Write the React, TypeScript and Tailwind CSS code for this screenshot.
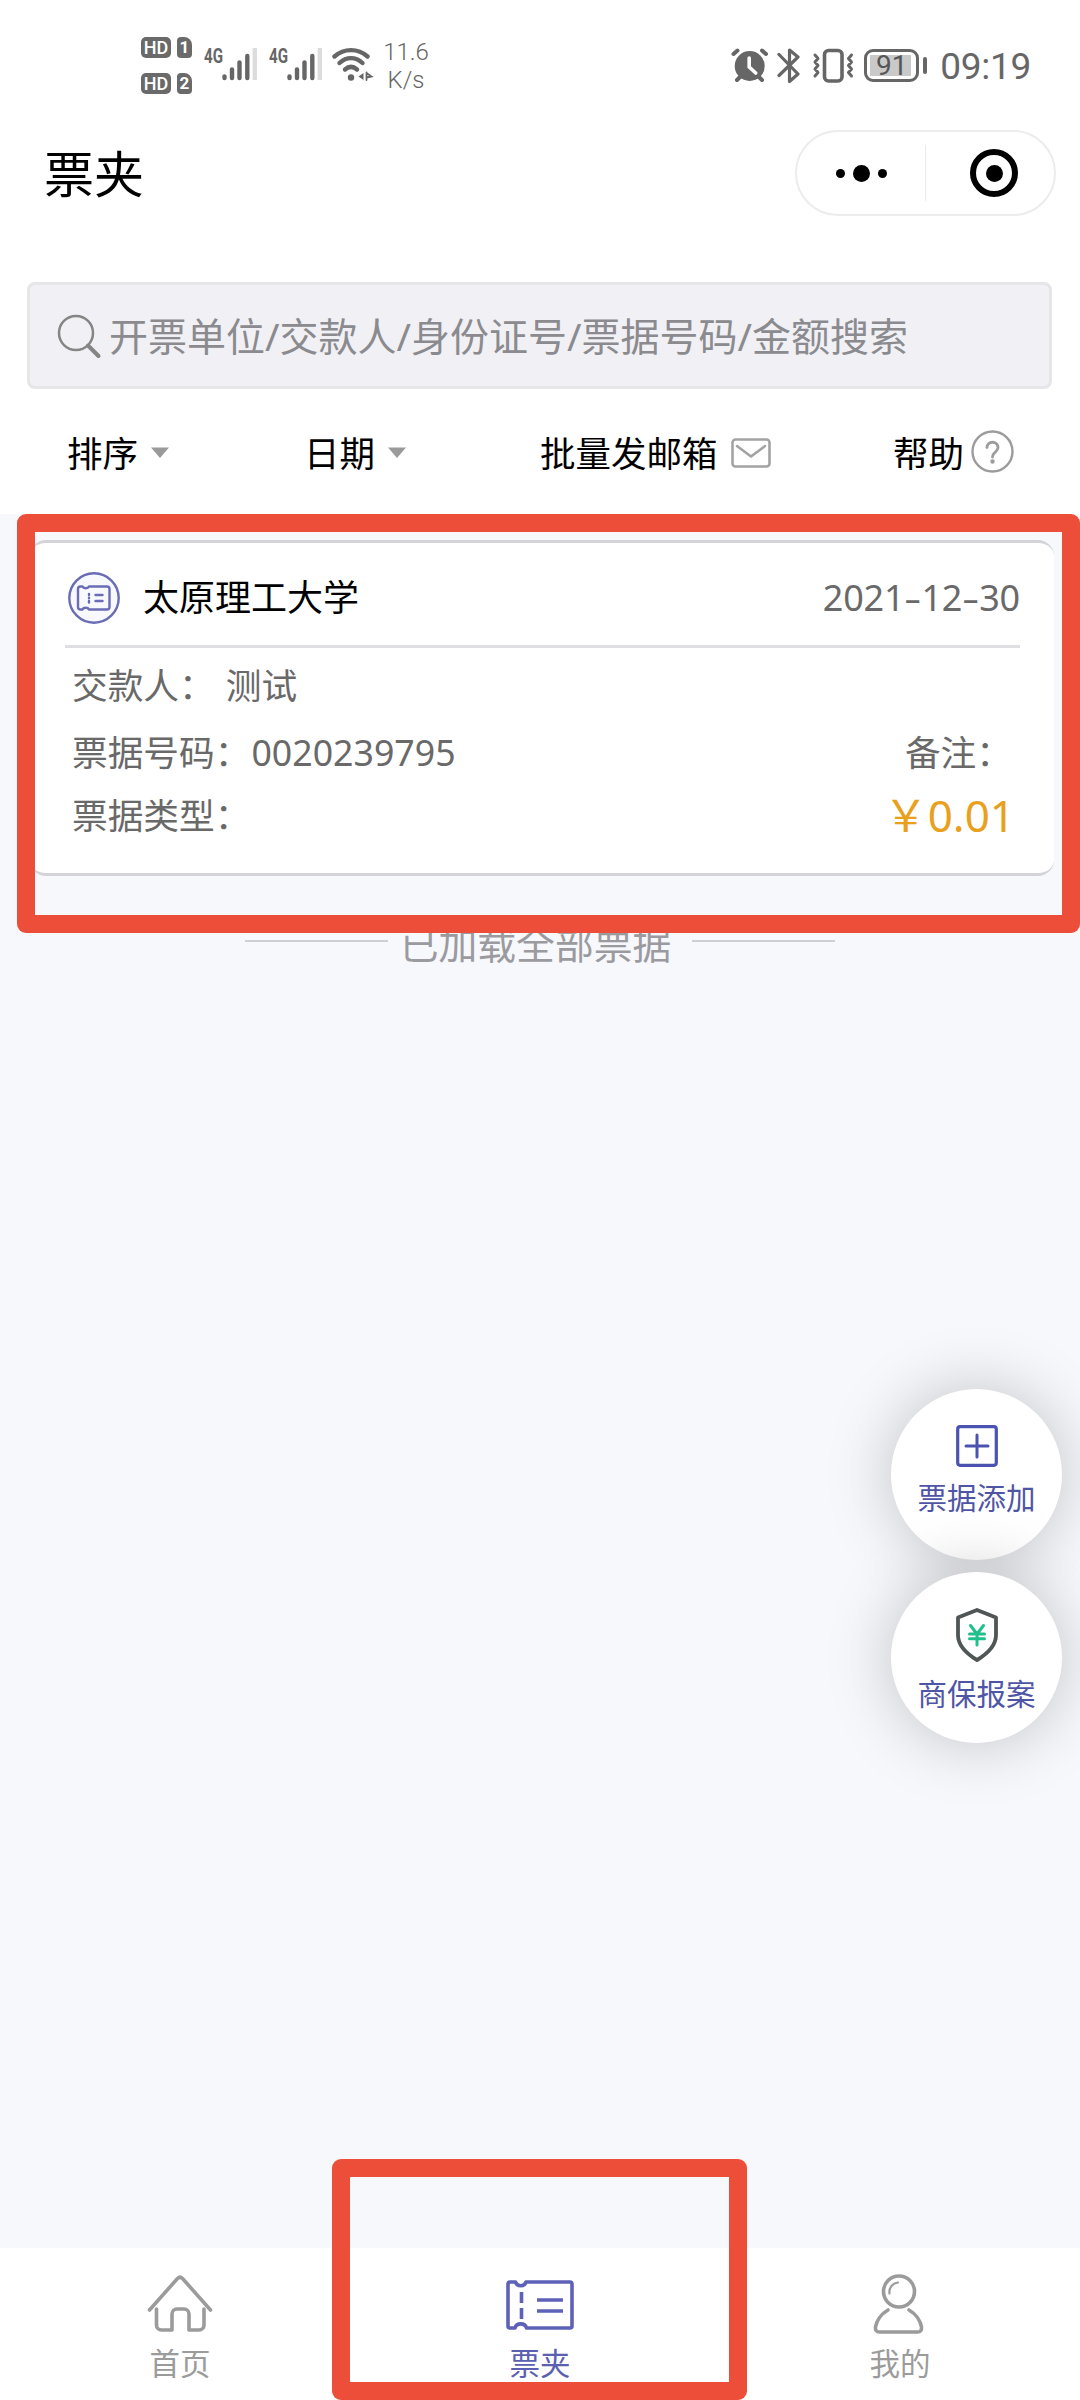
import type { ReactNode } from "react";

function SignalBars() {
  return (
    <div className="flex items-start">
      <span className="w-[18px] origin-left scale-x-[0.72] whitespace-nowrap font-[Roboto] text-[21px] leading-[18px] font-bold">
        4G
      </span>
      <svg width="36" height="36" viewBox="0 0 36 36" className="block">
        <g stroke="currentColor" strokeWidth="4.4" strokeLinecap="round">
          <path d="M2.5 29.5v1.5" />
          <path d="M10 22.5v8.5" />
          <path d="M17.5 15.5v15.5" />
          <path d="M25.3 9v22" />
        </g>
        <path d="M32.8 1v32" stroke="#dcdcdc" strokeWidth="4.4" />
      </svg>
    </div>
  );
}

function HdBadge({ sim }: { sim: string }) {
  return (
    <div className="flex gap-[6px] font-[Roboto] text-white">
      <span className="flex h-[21px] w-[30px] items-center justify-center rounded-[5px] bg-[#6a6a6a] text-[18px] leading-none font-medium">
        HD
      </span>
      <span className="flex h-[21px] w-[15px] items-center justify-center rounded-[4px] rounded-tr-[8px] bg-[#6a6a6a] text-[17px] leading-none font-bold">
        {sim}
      </span>
    </div>
  );
}

function StatusBar() {
  return (
    <div className="flex h-[124px] items-start justify-between pt-[37px] pr-[49px] pl-[141px] text-[#666]">
      <div className="flex">
        <div className="flex flex-col gap-[15px]">
          <HdBadge sim="1" />
          <HdBadge sim="2" />
        </div>
        <div className="mt-[10px] ml-[12px] flex gap-[11px]">
          <SignalBars />
          <SignalBars />
        </div>
        <svg
          width="42"
          height="36"
          viewBox="0 0 42 36"
          className="mt-[10px] ml-[9px]"
          fill="none"
          stroke="currentColor"
          strokeWidth="4.4"
          strokeLinecap="round"
        >
          <path d="M2.5 9.5C12 1 26 1 35.500 9.500" />
          <path d="M7.500 16C14.500 9.500 23.500 9.500 30.500 16" />
          <path d="M13 22.500c3.800-3.300 8.200-3.300 12 0" />
          <circle cx="19" cy="30.500" r="3.200" fill="currentColor" stroke="none" />
          <path d="M31.500 26v7l-5-3.500z" fill="currentColor" stroke="none" />
          <path d="M34.500 25.500v7.500M34.500 26l5 3.500-5 1" strokeWidth="1.800" />
        </svg>
        <div className="mt-[1px] ml-[8px] w-[48px] text-center font-[Roboto] text-[24px] leading-[28px] font-light">
          11.6
          <br />
          K/s
        </div>
      </div>

      <div className="mt-[10px] flex items-start">
        <svg width="37" height="37" viewBox="0 0 37 37" className="block">
          <g stroke="currentColor" strokeWidth="4" strokeLinecap="round" fill="none">
            <path d="M2.500 7l4-3.500M31 3.500l4 3.500M6 33l4-4M31 33l-4-4" />
          </g>
          <circle cx="18.700" cy="19" r="15" fill="currentColor" />
          <path
            d="M18.200 11v9l6.500 6"
            fill="none"
            stroke="#fff"
            strokeWidth="3.600"
            strokeLinecap="round"
          />
        </svg>
        <svg
          width="24"
          height="37"
          viewBox="0 0 24 37"
          className="ml-[9px]"
          fill="none"
          stroke="currentColor"
          strokeWidth="3.200"
          strokeLinecap="round"
          strokeLinejoin="round"
        >
          <path d="M2 7.500L21 27l-8.500 7.500V3L21 10 2 28.500" />
        </svg>
        <svg
          width="43"
          height="37"
          viewBox="0 0 43 37"
          className="ml-[11px]"
          fill="none"
          stroke="currentColor"
          strokeLinecap="round"
          strokeLinejoin="round"
        >
          <rect x="12.500" y="3.500" width="17.500" height="30.500" rx="4" strokeWidth="3.600" />
          <path
            d="M3 8l3 3.500-3 3.500 3 3.500-3 3.500 3 3.500-3 3.500M39.500 8l-3 3.500 3 3.500-3 3.500 3 3.500-3 3.500 3 3.500"
            strokeWidth="3"
          />
        </svg>
        <div className="mt-[2px] ml-[9px] flex items-center gap-[4px]">
          <div className="flex h-[33px] w-[55px] items-center rounded-[9px] border-[3px] border-current pl-[3px]">
            <div className="flex h-[21px] w-[41px] items-center justify-center bg-[#c9c9c9] pl-[2px] font-[Roboto] text-[28px] leading-none font-normal text-[#555]">
              91
            </div>
          </div>
          <div className="h-[17px] w-[4px] rounded-full bg-current" />
        </div>
        <div className="mt-[1px] ml-[13px] font-[Roboto] text-[37px] leading-[38px] font-normal tracking-[-0.3px]">
          09:19
        </div>
      </div>
    </div>
  );
}

function TitleBar() {
  return (
    <div className="flex h-[158px] items-start justify-between pr-[24px] pl-[44px]">
      <h1 className="mt-[20px] text-[50px] leading-[60px] text-black">票夹</h1>
      <div className="mt-[6px] flex h-[86px] w-[261px] items-center rounded-full border-[2px] border-[#ececec] bg-white">
        <div className="flex h-full w-[128px] items-center justify-center gap-[8px]">
          <span className="h-[9px] w-[9px] rounded-full bg-black" />
          <span className="h-[17px] w-[17px] rounded-full bg-black" />
          <span className="h-[9px] w-[9px] rounded-full bg-black" />
        </div>
        <div className="h-[56px] w-px bg-[#ebebeb]" />
        <div className="flex h-full flex-1 items-center justify-center pl-[8px]">
          <span className="flex h-[48px] w-[48px] items-center justify-center rounded-full border-[6px] border-black">
            <span className="h-[17px] w-[17px] rounded-full bg-black" />
          </span>
        </div>
      </div>
    </div>
  );
}

function SearchBox() {
  return (
    <div className="mr-[28px] ml-[27px] flex h-[107px] items-center rounded-[8px] border-[3px] border-[#e6e6e8] bg-[#f1f1f5] pl-[27px]">
      <svg
        width="46"
        height="46"
        viewBox="0 0 46 46"
        fill="none"
        stroke="#858585"
        strokeLinecap="round"
      >
        <circle cx="19" cy="20" r="17" strokeWidth="2.500" />
        <path d="M31 32.500l10.500 10.500" strokeWidth="4" />
      </svg>
      <span className="ml-[6px] text-[39px] leading-[50px] whitespace-nowrap text-[#8b8b8f]">
        开票单位/交款人/身份证号/票据号码/金额搜索
      </span>
    </div>
  );
}

function Caret() {
  return (
    <svg width="18" height="11" viewBox="0 0 18 11" className="ml-[13px]">
      <path d="M0 .500h18L9 11z" fill="#9a9a9a" />
    </svg>
  );
}

function FilterBar() {
  return (
    <div className="flex h-[125px] items-center pt-[2px] pl-[67px] text-[35.5px] leading-[44px] text-black">
      <div className="flex w-[237px] items-center">
        排序
        <Caret />
      </div>
      <div className="flex w-[236px] items-center">
        日期
        <Caret />
      </div>
      <div className="flex w-[353px] items-center">
        批量发邮箱
        <svg
          width="40"
          height="30"
          viewBox="0 0 40 30"
          className="ml-[13px]"
          fill="none"
          stroke="#a3a3a3"
          strokeWidth="2.600"
          strokeLinejoin="round"
          strokeLinecap="round"
        >
          <rect x="1.500" y="1.500" width="37" height="27" rx="3" />
          <path d="M6 8l14 10.500L34 8" />
        </svg>
      </div>
      <div className="flex items-center">
        帮助
        <svg
          width="43"
          height="43"
          viewBox="0 0 43 43"
          className="mb-[3px] ml-[7px]"
          fill="none"
          stroke="#9c9c9c"
          strokeWidth="2.400"
          strokeLinecap="round"
        >
          <circle cx="21.500" cy="21.500" r="20" />
          <path d="M16 17.500c0-7 11-7 11 0 0 4.500-5.500 4.500-5.500 9.500" strokeWidth="2.800" />
          <circle cx="21.500" cy="31.500" r="1" fill="#9c9c9c" />
        </svg>
      </div>
    </div>
  );
}

function CardIcon() {
  return (
    <svg
      width="52"
      height="52"
      viewBox="0 0 52 52"
      fill="none"
      stroke="#6a6cb4"
      strokeLinecap="round"
      strokeLinejoin="round"
    >
      <circle cx="26" cy="26" r="24.700" fill="#f8f9ff" strokeWidth="2.400" />
      <path
        d="M12.500 14.500h2c1 2.300 5.500 2.300 6.500 0h18a2.500 2.500 0 0 1 2.500 2.500v18a2.500 2.500 0 0 1-2.500 2.500H21c-1-2.300-5.500-2.300-6.500 0h-2a2.500 2.500 0 0 1-2.500-2.500v-18a2.500 2.500 0 0 1 2.500-2.500z"
        strokeWidth="2.400"
      />
      <path d="M21 22v1M21 29v1.500M27.500 23h7M27.500 29h7M21 25.800v.4" strokeWidth="2.400" />
    </svg>
  );
}

function TicketDate({ value }: { value: string }) {
  return (
    <span className="ml-auto flex text-[36px] tracking-[-0.2px]">
      {value.split("").map((char, i) =>
        char === "-" ? (
          <span key={i} className="w-[17px] scale-x-150 text-center">
            {char}
          </span>
        ) : (
          <span key={i}>{char}</span>
        )
      )}
    </span>
  );
}

function TicketCard() {
  return (
    <div className="mr-[26px] ml-[30px] h-[336px] rounded-[16px] border-y-[3px] border-[#d3d3d9] bg-white pr-[34px] pl-[35px] text-[35.7px] leading-[44px] text-[#696969]">
      <div className="flex h-[105px] items-center border-b-[3px] border-[#dfdfe1] pt-[7px] pl-[3px]">
        <CardIcon />
        <span className="ml-[23px] text-[36px] text-black">太原理工大学</span>
        <TicketDate value="2021-12-30" />
      </div>
      <div className="pr-[5px] pl-[7px]">
        <div className="flex h-[74px] items-center">
          <span>交款人：</span>
          <span className="ml-[11px]">测试</span>
        </div>
        <div className="flex h-[60px] items-center justify-between">
          <div className="flex">
            <span>票据号码：</span>
            <span className="ml-[1px]">0020239795</span>
          </div>
          <span className="mr-[3px]">备注：</span>
        </div>
        <div className="flex h-[65px] items-center justify-between">
          <span>票据类型：</span>
          <span className="text-[44px]">
            <span className="text-[#e9a01d]">￥0.01</span>
          </span>
        </div>
      </div>
    </div>
  );
}

function ListEnd() {
  return (
    <div className="mt-[44px] flex h-[48px] items-center justify-center gap-[12px] text-[38.8px] leading-[48px] text-[#9b9b9f]">
      <span className="mb-[6px] h-[2px] w-[143px] bg-[#cfcfd3]" />
      <span>已加载全部票据</span>
      <span className="mb-[6px] ml-[9px] h-[2px] w-[143px] bg-[#cfcfd3]" />
    </div>
  );
}

function FloatButton({ icon, label }: { icon: ReactNode; label: string }) {
  return (
    <div className="flex h-[171px] w-[171px] flex-col items-center rounded-full bg-white pt-[36px] text-[#4f55a5] shadow-[0_0_66px_rgba(0,0,0,0.22)]">
      {icon}
      <span className="text-[29.5px] leading-[36px] whitespace-nowrap">{label}</span>
    </div>
  );
}

function FloatButtons() {
  return (
    <div className="absolute top-[1389px] right-[18px] flex flex-col gap-[12px]">
      <FloatButton
        label="票据添加"
        icon={
          <svg
            width="42"
            height="42"
            viewBox="0 0 42 42"
            className="mb-[13px]"
            fill="none"
            stroke="#4a53b0"
            strokeLinecap="round"
          >
            <rect x="1.700" y="1.700" width="38.600" height="38.600" rx="2.500" strokeWidth="3.200" />
            <path d="M10 21h22M21 10v22" strokeWidth="3" />
          </svg>
        }
      />
      <FloatButton
        label="商保报案"
        icon={
          <svg
            width="42"
            height="54"
            viewBox="0 0 42 54"
            className="mb-[14px]"
            fill="none"
            strokeLinejoin="round"
          >
            <path
              d="M21 2L40 9.500V27c0 11-9 19-19 25C11 46 2 38 2 27V9.500z"
              stroke="#505556"
              strokeWidth="3.800"
            />
            <path
              d="M14.500 17.500l6.500 8.500 6.500-8.500M21 26v11M13.500 26h15M13.500 30.800h15"
              stroke="#1fc08a"
              strokeWidth="3"
              strokeLinecap="round"
            />
          </svg>
        }
      />
    </div>
  );
}

function TabItem({
  icon,
  label,
  active,
}: {
  icon: ReactNode;
  label: string;
  active?: boolean;
}) {
  return (
    <div
      className={`flex flex-col items-center pt-[24px] ${
        active ? "text-[#5c60b0]" : "text-[#9b9b9b]"
      }`}
    >
      <div className="flex h-[64px] items-center">{icon}</div>
      <span className="mt-[7px] text-[30.5px] leading-[40px]">{label}</span>
    </div>
  );
}

function TabBar() {
  return (
    <div className="mt-auto grid h-[152px] grid-cols-3 bg-white">
      <TabItem
        label="首页"
        icon={
          <svg
            width="66"
            height="60"
            viewBox="0 0 66 60"
            fill="none"
            stroke="currentColor"
            strokeWidth="3.600"
            strokeLinecap="round"
            strokeLinejoin="round"
          >
            <path d="M2.500 36L30.500 4.500q2.500-2.500 5 0L63.500 36" />
            <path d="M9.500 35v16a5 5 0 0 0 5 5H25V40a5 5 0 0 1 5-5h7a5 5 0 0 1 5 5v16h10a5 5 0 0 0 5-5V35" />
          </svg>
        }
      />
      <TabItem
        active
        label="票夹"
        icon={
          <svg
            width="68"
            height="50"
            viewBox="0 0 68 50"
            className="mt-[2px]"
            fill="none"
            stroke="#5d61b8"
            strokeWidth="3.600"
            strokeLinejoin="round"
          >
            <path d="M4 2h5.500c1.500 5 9 5 10.500 0H64a2 2 0 0 1 2 2v42a2 2 0 0 1-2 2H20.500c-1.500-5.500-10-5.500-11.500 0H4a2 2 0 0 1-2-2V4a2 2 0 0 1 2-2z" />
            <path d="M15.500 12v11M15.500 28v11M31 20h26M31 31h26" />
          </svg>
        }
      />
      <TabItem
        label="我的"
        icon={
          <svg
            width="52"
            height="62"
            viewBox="0 0 52 62"
            className="mr-[2px]"
            fill="none"
            stroke="currentColor"
            strokeWidth="3.600"
            strokeLinecap="round"
            strokeLinejoin="round"
          >
            <circle cx="26" cy="18.500" r="15.500" />
            <path d="M16.500 20.500a9.500 9.500 0 0 1 8.500-11" strokeWidth="2.200" />
            <path d="M15 37C8 41 3.500 48 2.500 54q-.5 5 4 5h38q4.500 0 4-5C47.500 48 43 41 36 37" />
          </svg>
        }
      />
    </div>
  );
}

export default function App() {
  return (
    <div className="relative flex h-[2400px] w-[1080px] flex-col overflow-hidden bg-[#f7f8fc] font-['Noto_Sans','Noto_Sans_CJK_SC',sans-serif]">
      <div className="bg-white">
        <StatusBar />
        <TitleBar />
        <SearchBox />
        <FilterBar />
      </div>
      <div className="pt-[26px]">
        <TicketCard />
        <ListEnd />
      </div>
      <TabBar />

      <FloatButtons />

      {/* red highlight frames drawn over the page */}
      <div className="absolute top-[514px] left-[17px] h-[419px] w-[1063px] rounded-[9px] bg-transparent shadow-[inset_0_0_0_18px_#ec4e39]" />
      <div className="absolute top-[2159px] left-[332px] h-[241px] w-[415px] rounded-[9px] bg-transparent shadow-[inset_0_0_0_18px_#ec4e39]" />
    </div>
  );
}
